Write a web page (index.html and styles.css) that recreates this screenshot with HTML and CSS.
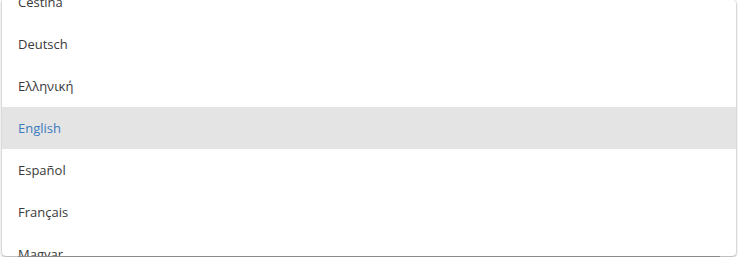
FILE: index.html
```html
<!DOCTYPE html>
<html lang="en">
<head>
<meta charset="utf-8">
<title>Language menu</title>
<link rel="stylesheet" href="styles.css">
</head>
<body>
<div class="menu">
  <ul class="menu-list">
    <li class="menu-item">Čeština</li>
    <li class="menu-item">Deutsch</li>
    <li class="menu-item">Ελληνική</li>
    <li class="menu-item is-active">English</li>
    <li class="menu-item">Español</li>
    <li class="menu-item">Français</li>
    <li class="menu-item">Magyar</li>
  </ul>
</div>
<div class="menu-rule"></div>
</body>
</html>
```

FILE: styles.css
```css
html, body {
  margin: 0;
  padding: 0;
  background: #ffffff;
}

body {
  font-family: "Open Sans", "Liberation Sans", sans-serif;
  font-size: 13px;
  color: #3a3a3a;
}

.menu {
  margin-left: 2px;
  width: 734px;
  height: 256px;
  overflow: hidden;
  background: #ffffff;
  border-radius: 0 4px 4px 4px;
  box-shadow: 0 1px 3px rgba(0, 0, 0, 0.35), 0 0 2px rgba(0, 0, 0, 0.12);
}

.menu-list {
  list-style: none;
  margin: -19px 0 0 0;
  padding: 0;
}

.menu-item {
  height: 42px;
  line-height: 42px;
  padding-left: 16px;
  white-space: nowrap;
}

.menu-item.is-active {
  background: #e4e4e4;
  color: #3b7bbf;
}

.menu-rule {
  height: 1px;
  width: 702px;
  margin-left: 18px;
  background: #8a8a8a;
}
```
